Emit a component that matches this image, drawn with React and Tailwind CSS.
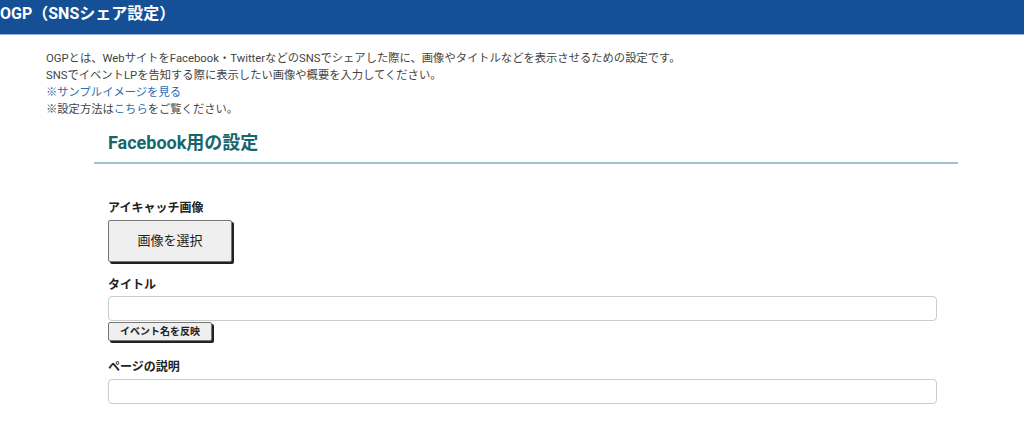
export default function App() {
  return (
    <div className="min-h-screen bg-white text-[#333] font-['Roboto','Noto_Sans_CJK_JP',sans-serif]">
      {/* Header */}
      <div className="h-[35px] bg-[#154f96] border-b border-[#8fb3dc] flex items-center">
        <h1 className="text-[16px] font-bold text-white leading-none pb-[6px]">OGP（SNSシェア設定）</h1>
      </div>

      {/* Intro */}
      <div className="pl-[46px] pt-[15px] text-[11.3px] leading-[17px] text-[#444]">
        <p>OGPとは、WebサイトをFacebook・TwitterなどのSNSでシェアした際に、画像やタイトルなどを表示させるための設定です。</p>
        <p>SNSでイベントLPを告知する際に表示したい画像や概要を入力してください。</p>
        <p>
          <a href="#" className="text-[#2a6bb3]">※サンプルイメージを見る</a>
        </p>
        <p>
          ※設定方法は<a href="#" className="text-[#2a6bb3]">こちら</a>をご覧ください。
        </p>
      </div>

      {/* Facebook section */}
      <div className="ml-[94px] w-[864px] mt-[12px]">
        <h2 className="pl-[14px] pb-[6px] text-[18px] font-bold leading-[26px] text-[#16666c] border-b-2 border-[#9ec4c7]">
          Facebook用の設定
        </h2>

        <div className="pl-[14px] pr-[21px] pt-[36px]">
          <div>
            <label className="block text-[12px] font-bold leading-[16px] text-[#222]">アイキャッチ画像</label>
            <button className="mt-[4px] w-[124px] h-[42px] bg-[#efefef] border border-[#777] rounded-[2px] shadow-[2px_2px_0_#222] text-[13px] text-[#222]">
              画像を選択
            </button>
          </div>

          <div className="mt-[15px]">
            <label className="block text-[12px] font-bold leading-[16px] text-[#222]">タイトル</label>
            <input type="text" className="mt-[3px] block w-full h-[25px] border border-[#ccc] rounded-[4px] px-2 text-[12px]" />
            <button className="block mt-[1px] w-[104px] h-[19px] bg-[#efefef] border border-[#777] rounded-[2px] shadow-[2px_2px_0_#222] text-[10px] font-bold leading-none text-[#222]">
              イベント名を反映
            </button>
          </div>

          <div className="mt-[18px]">
            <label className="block text-[12px] font-bold leading-[16px] text-[#222]">ページの説明</label>
            <input type="text" className="mt-[4px] block w-full h-[25px] border border-[#ccc] rounded-[4px] px-2 text-[12px]" />
          </div>
        </div>
      </div>
    </div>
  );
}
